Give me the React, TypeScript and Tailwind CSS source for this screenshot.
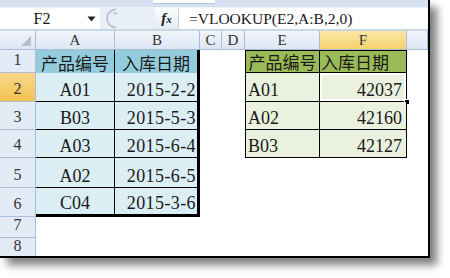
function ColHead({ w, label, active }: { w: string; label: string; active?: boolean }) {
  return (
    <div
      className={`${w} shrink-0 h-full flex items-center justify-center border-r border-b border-[#a9bdd6] text-[15px] text-[#333] ${
        active ? 'bg-gradient-to-b from-[#fbe7a6] to-[#f6d16b]' : 'bg-gradient-to-b from-[#f1f5fb] to-[#dce6f3]'
      }`}
    >
      {label}
    </div>
  );
}

function RowHead({ n, active }: { n: number; active?: boolean }) {
  return (
    <div
      className={`w-[36px] shrink-0 h-full flex items-end justify-center pb-[2px] border-r border-b border-[#a9bdd6] text-[16px] leading-[20px] text-[#333] ${
        active ? 'bg-gradient-to-b from-[#fad88a] to-[#f3c14e]' : 'bg-[#e3ebf6]'
      }`}
    >
      {n}
    </div>
  );
}

type DataRow = {
  n: number;
  h: string;
  a: string;
  b: string;
  e?: string;
  f?: string;
  last?: boolean;
  sel?: boolean;
};

const rows: DataRow[] = [
  { n: 2, h: 'h-[29px]', a: 'A01', b: '2015-2-2', e: 'A01', f: '42037', sel: true },
  { n: 3, h: 'h-[28px]', a: 'B03', b: '2015-5-3', e: 'A02', f: '42160' },
  { n: 4, h: 'h-[28px]', a: 'A03', b: '2015-6-4', e: 'B03', f: '42127' },
  { n: 5, h: 'h-[30px]', a: 'A02', b: '2015-6-5' },
  { n: 6, h: 'h-[29px]', a: 'C04', b: '2015-3-6', last: true },
];

function Row({ r }: { r: DataRow }) {
  const hasEF = r.e !== undefined;
  return (
    <div className={`flex shrink-0 ${r.h}`}>
      <RowHead n={r.n} active={r.sel} />
      <div
        className={`w-[79px] shrink-0 flex items-end justify-center leading-[22px] bg-[#daeef3] border-r border-black ${
          r.last ? 'border-b-[3px]' : 'border-b'
        }`}
      >
        {r.a}
      </div>
      <div
        className={`w-[85px] shrink-0 flex items-end justify-end pr-[1px] leading-[22px] tracking-[0.4px] bg-[#daeef3] border-r-[3px] border-black ${
          r.last ? 'border-b-[3px]' : 'border-b'
        }`}
      >
        {r.b}
      </div>
      <div className="w-[22px] shrink-0 bg-white" />
      <div className="w-[23px] shrink-0 bg-white" />
      {hasEF ? (
        <>
          <div className="w-[75px] shrink-0 flex items-end justify-start pl-[2px] leading-[22px] bg-[#ebf1df] border-l border-r border-b border-black">
            {r.e}
          </div>
          <div className="relative w-[87px] shrink-0 flex items-end justify-end pr-[4px] leading-[22px] bg-[#ebf1df] border-r border-b border-black">
            {r.sel && (
              <>
                <div className="absolute -left-[1px] -top-[1px] -right-[1px] -bottom-[1px] border border-black">
                  <div className="w-full h-full border-2 border-white" />
                </div>
                <div className="absolute -right-[4px] -bottom-[4px] w-[6px] h-[6px] bg-black border border-white" />
              </>
            )}
            <span className="relative">{r.f}</span>
          </div>
        </>
      ) : (
        <>
          <div className="w-[75px] shrink-0 bg-white" />
          <div className="w-[87px] shrink-0 bg-white" />
        </>
      )}
      <div className="w-[21px] shrink-0 bg-white" />
    </div>
  );
}

export default function App() {
  return (
    <div className="w-[450px] h-[278px] bg-white overflow-hidden font-['Liberation_Serif',serif] text-[18px] text-[#1a1a1a]">
      <div className="w-[430px] h-[258px] flex flex-col overflow-hidden bg-white border-r-2 border-b-2 border-black shadow-[7px_7px_8px_rgba(0,0,0,0.5)]">
        {/* ribbon bottom */}
        <div className="h-[8px] shrink-0 flex bg-[#d6e2f0] border-b border-[#eef3f9]">
          <div className="w-[153px]" />
          <div className="w-[62px] h-[4px] bg-white border-b border-[#b7c6d9]" />
        </div>

        {/* formula bar */}
        <div className="h-[21px] shrink-0 flex bg-[#e9eff7]">
          <div className="w-[100px] shrink-0 h-full bg-white flex items-center">
            <span className="w-[84px] text-center text-[16px] leading-none">F2</span>
            <svg width="9" height="6" viewBox="0 0 9 6" className="ml-[3px]">
              <path d="M0.5 0.5 H8.5 L4.5 5.5 Z" fill="#222" />
            </svg>
          </div>
          <div className="w-[55px] shrink-0 h-full flex items-center">
            <svg width="16" height="21" viewBox="0 0 16 21" className="ml-[2px]">
              <path d="M14 1.5 A9 9 0 0 0 14 19.5" fill="none" stroke="#b9c3cf" strokeWidth="2" />
              <path d="M12 5 A6 6 0 0 1 15 6" fill="none" stroke="#8a96a6" strokeWidth="1" />
            </svg>
          </div>
          <div className="w-[24px] shrink-0 h-full flex items-center justify-center bg-gradient-to-b from-[#fbfcfe] to-[#e4ebf4] border-r border-[#c5d2e2]">
            <span className="italic font-bold text-[15px] leading-none">
              f<span className="text-[11px]">x</span>
            </span>
          </div>
          <div className="flex-1 h-full bg-white flex items-center pl-[10px] text-[15.5px] leading-none">
            =VLOOKUP(E2,A:B,2,0)
          </div>
        </div>
        <div className="h-[2px] shrink-0 bg-[#c9d6e6]" />

        {/* column headers */}
        <div className="h-[19px] shrink-0 flex">
          <div className="w-[36px] shrink-0 h-full flex items-end justify-end pr-[4px] pb-[3px] bg-gradient-to-b from-[#f1f5fb] to-[#dce6f3] border-r border-b border-[#a9bdd6]">
            <svg width="10" height="10" viewBox="0 0 10 10">
              <path d="M10 0 V10 H0 Z" fill="#b5bfcc" />
            </svg>
          </div>
          <ColHead w="w-[79px]" label="A" />
          <ColHead w="w-[85px]" label="B" />
          <ColHead w="w-[22px]" label="C" />
          <ColHead w="w-[23px]" label="D" />
          <ColHead w="w-[75px]" label="E" />
          <ColHead w="w-[87px]" label="F" active />
          <ColHead w="w-[21px]" label="" />
        </div>

        {/* row 1 */}
        <div className="flex h-[23px] shrink-0 text-[17px]">
          <RowHead n={1} />
          <div className="w-[79px] shrink-0 flex items-end justify-center bg-[#93cddd] border-r border-black leading-[20px] font-['Noto_Sans_CJK_SC',sans-serif]">
            产品编号
          </div>
          <div className="w-[85px] shrink-0 flex items-end justify-center bg-[#93cddd] border-r-[3px] border-black leading-[20px] font-['Noto_Sans_CJK_SC',sans-serif]">
            入库日期
          </div>
          <div className="w-[22px] shrink-0 bg-white" />
          <div className="w-[23px] shrink-0 bg-white" />
          <div className="w-[75px] shrink-0 flex items-end justify-center bg-[#9bbb59] border border-black leading-[20px] font-['Noto_Sans_CJK_SC',sans-serif]">
            产品编号
          </div>
          <div className="w-[87px] shrink-0 flex items-end justify-start pl-[1px] bg-[#9bbb59] border-t border-r border-b border-black leading-[20px] font-['Noto_Sans_CJK_SC',sans-serif]">
            入库日期
          </div>
          <div className="w-[21px] shrink-0 bg-white" />
        </div>

        {rows.map((r) => (
          <Row key={r.n} r={r} />
        ))}

        <div className="flex h-[21px] shrink-0">
          <RowHead n={7} />
          <div className="flex-1 bg-white" />
        </div>
        <div className="flex h-[21px] shrink-0">
          <RowHead n={8} />
          <div className="flex-1 bg-white" />
        </div>
      </div>
    </div>
  );
}
